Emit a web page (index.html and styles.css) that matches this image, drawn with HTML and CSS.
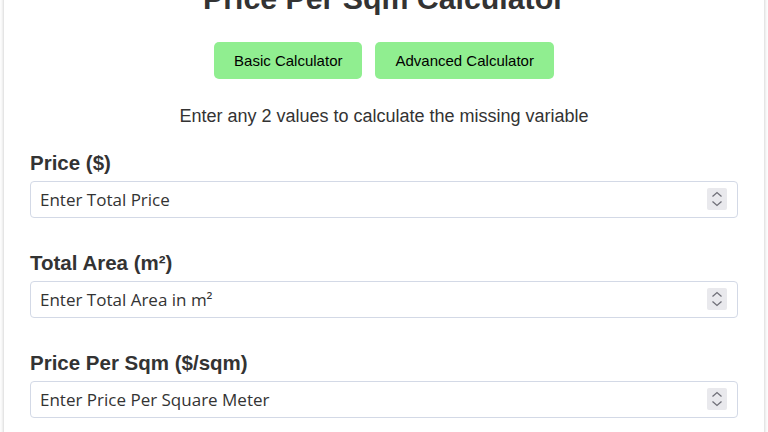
FILE: index.html
```html
<!DOCTYPE html>
<html lang="en">
<head>
    <meta charset="UTF-8">
    <meta name="viewport" content="width=device-width, initial-scale=1.0">
    <title>Price Per Sqm Calculator</title>
    <link rel="stylesheet" href="styles.css">
</head>
<body>
<div class="calculator-container">
    <h1>Price Per Sqm Calculator</h1>
    <div class="mode-buttons">
        <button class="mode-btn">Basic Calculator</button>
        <button class="mode-btn">Advanced Calculator</button>
    </div>
    <p class="hint">Enter any 2 values to calculate the missing variable</p>

    <div class="form-group">
        <label for="price">Price ($)</label>
        <div class="input-wrap">
            <input type="number" id="price" placeholder="Enter Total Price">
            <span class="spinner"><svg width="20" height="22" viewBox="0 0 20 22"><path d="M5.5 8.5 L10 4.5 L14.5 8.5 M5.5 13.5 L10 17.5 L14.5 13.5" fill="none" stroke="#6f6f78" stroke-width="1.3"/></svg></span>
        </div>
    </div>
    <div class="form-group">
        <label for="area">Total Area (m²)</label>
        <div class="input-wrap">
            <input type="number" id="area" placeholder="Enter Total Area in m²">
            <span class="spinner"><svg width="20" height="22" viewBox="0 0 20 22"><path d="M5.5 8.5 L10 4.5 L14.5 8.5 M5.5 13.5 L10 17.5 L14.5 13.5" fill="none" stroke="#6f6f78" stroke-width="1.3"/></svg></span>
        </div>
    </div>
    <div class="form-group">
        <label for="pricePerSqm">Price Per Sqm ($/sqm)</label>
        <div class="input-wrap">
            <input type="number" id="pricePerSqm" placeholder="Enter Price Per Square Meter">
            <span class="spinner"><svg width="20" height="22" viewBox="0 0 20 22"><path d="M5.5 8.5 L10 4.5 L14.5 8.5 M5.5 13.5 L10 17.5 L14.5 13.5" fill="none" stroke="#6f6f78" stroke-width="1.3"/></svg></span>
        </div>
    </div>
</div>
</body>
</html>
```

FILE: styles.css
```css
body {
    font-family: "Liberation Sans", Arial, sans-serif;
    margin: 0;
    padding: 0;
    background-color: #fff;
    color: #333;
}

.calculator-container {
    margin: 0 4px;
    padding: 0 26px 20px;
    background-color: #fff;
    box-shadow: 0 0 4px rgba(0, 0, 0, 0.25);
}

h1 {
    font-size: 30.3px;
    text-align: center;
    margin: -18px 0 26px;
    color: #333;
}

.mode-buttons {
    display: flex;
    justify-content: center;
    gap: 13px;
}

.mode-btn {
    padding: 10px 20px;
    background-color: #90EE90;
    color: #000;
    border: none;
    border-radius: 5px;
    font-family: "Liberation Sans", Arial, sans-serif;
    font-size: 15px;
    cursor: pointer;
}

.hint {
    text-align: center;
    font-size: 18px;
    margin: 27px 0 24px;
}

.form-group {
    margin-bottom: 33px;
}

label {
    display: block;
    font-size: 20.5px;
    font-weight: bold;
    margin-bottom: 6px;
}

.input-wrap {
    position: relative;
}

input {
    box-sizing: border-box;
    width: 100%;
    height: 37px;
    padding: 8px 9px;
    border: 1px solid #d3d9e6;
    border-radius: 4px;
    font-family: "Open Sans", "Noto Sans", sans-serif;
    font-size: 17px;
    color: #333;
    -moz-appearance: textfield;
}

input::-webkit-inner-spin-button,
input::-webkit-outer-spin-button {
    -webkit-appearance: none;
    margin: 0;
}

input::placeholder {
    color: #333;
}

.spinner {
    position: absolute;
    top: 7px;
    right: 11px;
    width: 20px;
    height: 22px;
    background-color: #e9e9ed;
    border-radius: 2px;
    pointer-events: none;
}

.spinner svg {
    display: block;
}
```
